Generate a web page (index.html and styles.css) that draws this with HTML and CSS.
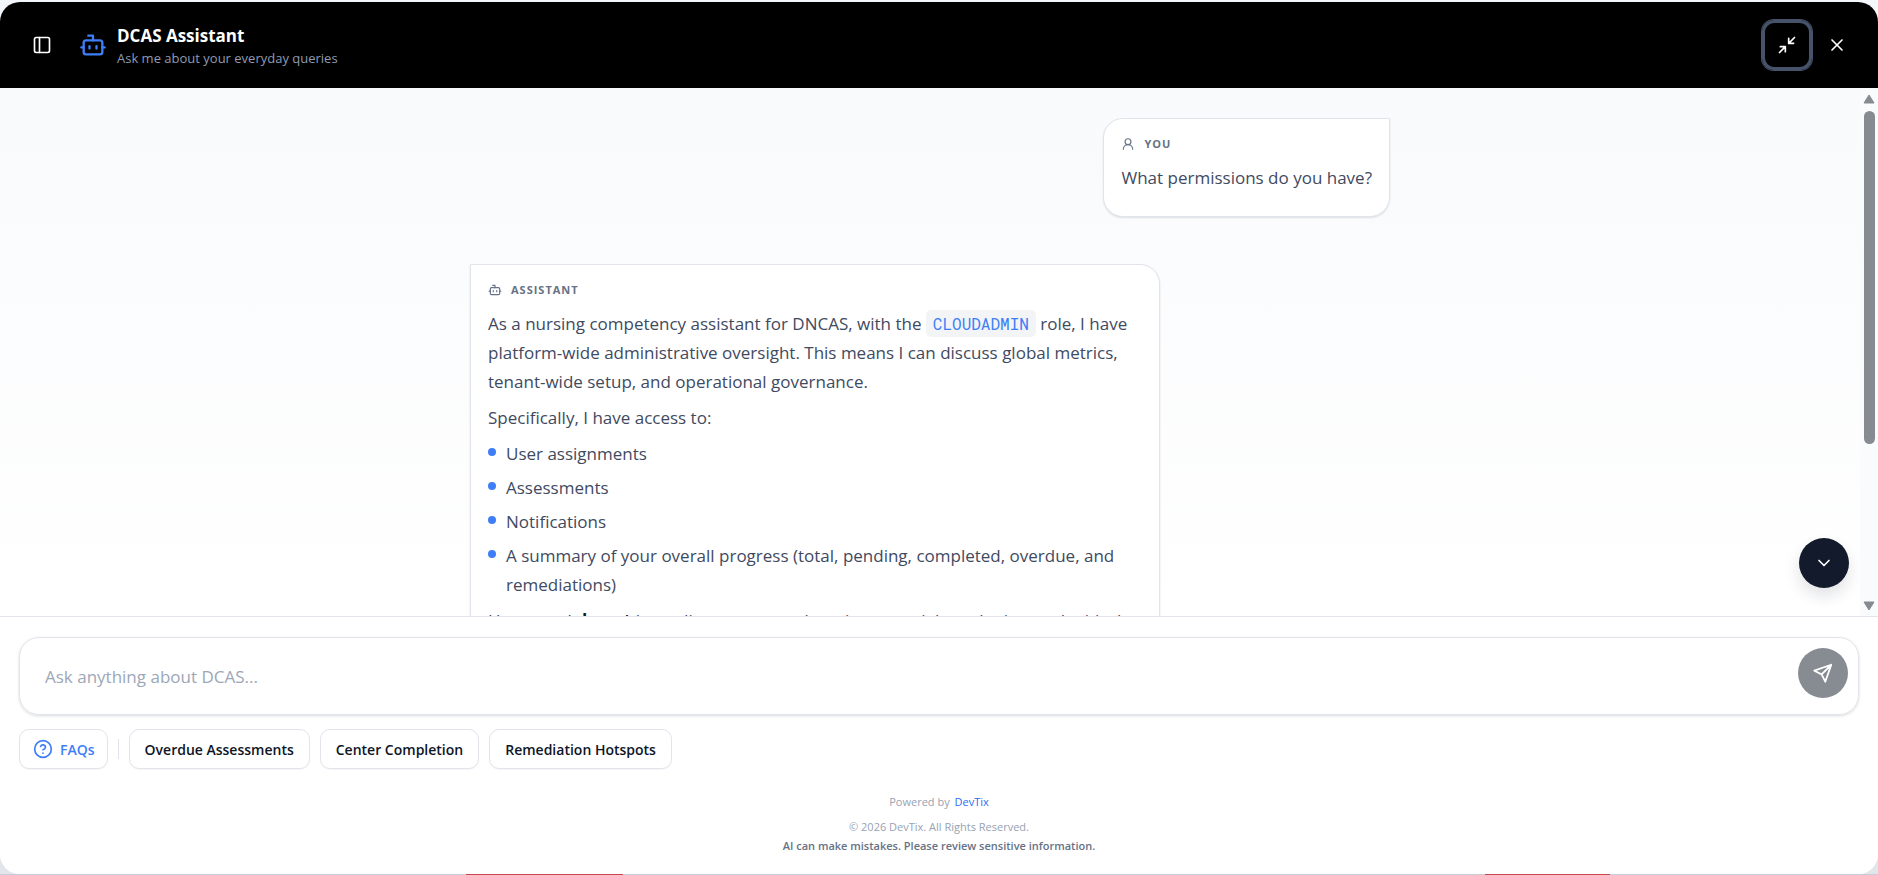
FILE: index.html
```html
<!DOCTYPE html>
<html lang="en">
  <head>
    <meta charset="utf-8" />
    <title>DCAS Assistant</title>
    <link rel="stylesheet" href="styles.css" />
  </head>
  <body>
    <div class="panel">
      <header class="header">
        <button class="icon-btn" aria-label="Toggle sidebar">
          <svg class="icon" width="20" height="20" viewBox="0 0 24 24">
            <rect x="3" y="3" width="18" height="18" rx="2" />
            <path d="M9 3v18" />
          </svg>
        </button>
        <svg class="icon bot" width="28" height="28" viewBox="0 0 24 24">
          <path d="M12 8V4H8" />
          <rect x="4" y="8" width="16" height="12" rx="2" />
          <path d="M2 14h2M20 14h2M15 13v2M9 13v2" />
        </svg>
        <div class="titles">
          <h1>DCAS Assistant</h1>
          <p>Ask me about your everyday queries</p>
        </div>
        <button class="icon-btn focused" aria-label="Exit full screen">
          <svg class="icon" width="20" height="20" viewBox="0 0 24 24">
            <path d="M4 14h6v6M20 10h-6V4M14 10l7-7M3 21l7-7" />
          </svg>
        </button>
        <button class="icon-btn" aria-label="Close">
          <svg class="icon" width="20" height="20" viewBox="0 0 24 24">
            <path d="M18 6 6 18M6 6l12 12" />
          </svg>
        </button>
      </header>

      <div class="chat">
        <main class="messages">
          <div class="thread">
            <article class="bubble user">
              <div class="sender">
                <svg class="icon" width="14" height="14" viewBox="0 0 24 24">
                  <circle cx="12" cy="8" r="5" />
                  <path d="M20 21a8 8 0 0 0-16 0" />
                </svg>
                <span>You</span>
              </div>
              <p>What permissions do you have?</p>
            </article>

            <article class="bubble assistant">
              <div class="sender">
                <svg class="icon" width="14" height="14" viewBox="0 0 24 24">
                  <path d="M12 8V4H8" />
                  <rect x="4" y="8" width="16" height="12" rx="2" />
                  <path d="M2 14h2M20 14h2M15 13v2M9 13v2" />
                </svg>
                <span>Assistant</span>
              </div>
              <p>
                As a nursing competency assistant for DNCAS, with the
                <code>CLOUDADMIN</code> role, I have platform-wide
                administrative oversight. This means I can discuss global
                metrics, tenant-wide setup, and operational governance.
              </p>
              <p>Specifically, I have access to:</p>
              <ul>
                <li>User assignments</li>
                <li>Assessments</li>
                <li>Notifications</li>
                <li>
                  A summary of your overall progress (total, pending,
                  completed, overdue, and remediations)
                </li>
              </ul>
              <p>
                However, I <b>do not</b> have direct access to learning
                materials or the internal critical
              </p>
            </article>
          </div>
          <button class="scroll-down" aria-label="Scroll to bottom">
            <svg class="icon" width="20" height="20" viewBox="0 0 24 24">
              <path d="m6 9 6 6 6-6" />
            </svg>
          </button>
        </main>
        <div class="scrollbar">
          <svg width="14" height="10" viewBox="0 0 14 10">
            <path d="M7 1 12 9H2z" />
          </svg>
          <div class="track"><div class="thumb"></div></div>
          <svg width="14" height="10" viewBox="0 0 14 10">
            <path d="M7 9 2 1h10z" />
          </svg>
        </div>
      </div>

      <footer class="footer">
        <form class="composer">
          <input
            type="text"
            placeholder="Ask anything about DCAS..."
            aria-label="Message"
          />
          <button type="button" class="send" aria-label="Send">
            <svg class="icon" width="22" height="22" viewBox="0 0 24 24">
              <path d="M21 3 2.500 9.500 10.500 13.500 14.500 21.500zM21 3 10.500 13.500" />
            </svg>
          </button>
        </form>

        <div class="chips">
          <button class="chip faq">
            <svg class="icon" width="20" height="20" viewBox="0 0 24 24">
              <circle cx="12" cy="12" r="10" />
              <path d="M9.090 9a3 3 0 0 1 5.830 1c0 2-3 3-3 3M12 17h.01" />
            </svg>
            FAQs
          </button>
          <span class="divider"></span>
          <button class="chip">Overdue Assessments</button>
          <button class="chip">Center Completion</button>
          <button class="chip">Remediation Hotspots</button>
        </div>

        <div class="legal">
          <p class="powered">Powered by <a href="#">DevTix</a></p>
          <p>&copy; 2026 DevTix. All Rights Reserved.</p>
          <p class="warning">
            AI can make mistakes. Please review sensitive information.
          </p>
        </div>
      </footer>
    </div>
  </body>
</html>
```

FILE: styles.css
```css
* {
  box-sizing: border-box;
}
body {
  margin: 0;
  height: 100vh;
  padding: 2px 0 1px;
  font-family: "Segoe UI", "Open Sans", "Noto Sans", sans-serif;
  color: #3f4a5f;
  /* page edge that shows below the panel */
  background:
    linear-gradient(90deg, #c9cdd8 0 466px, #c8474f 466px 623px, #c9cdd8 623px 1485px, #c8474f 1485px 1610px, #c9cdd8 1610px) bottom / 100% 1px no-repeat,
    linear-gradient(#f3f6fa, #e2e6eb);
}
p,
h1,
ul {
  margin: 0;
}
button,
input {
  font-family: inherit;
}
button {
  cursor: pointer;
}
.icon {
  flex: none;
  fill: none;
  stroke: currentColor;
  stroke-width: 2;
  stroke-linecap: round;
  stroke-linejoin: round;
}
.panel {
  display: flex;
  flex-direction: column;
  height: 100%;
  overflow: hidden;
  border-radius: 20px;
  background: #fff;
}

/* header */
.header {
  display: flex;
  align-items: center;
  height: 86px;
  padding: 0 16px 0 17px;
  background: #000;
  color: #fff;
}
.icon-btn {
  display: flex;
  align-items: center;
  justify-content: center;
  width: 50px;
  height: 50px;
  padding: 0;
  border: 0;
  border-radius: 12px;
  background: none;
  color: #fff;
}
.icon-btn.focused {
  box-shadow: 0 0 0 1px #46536a;
  border: 3px solid #46536a;
}
.bot {
  margin: 0 10px 0 12px;
  color: #3f7ef7;
}
.titles {
  flex: 1;
  padding-top: 2px;
}
.titles h1 {
  font-size: 17px;
  line-height: 24px;
}
.titles p {
  font-size: 13px;
  line-height: 20px;
  color: #8f9bb0;
}

/* messages */
.chat {
  display: flex;
  flex: 1;
  min-height: 0;
}
.messages {
  position: relative;
  flex: 1;
  overflow: hidden;
  padding-top: 30px;
  background: linear-gradient(#f9fafc, #fff);
}
.thread {
  display: flex;
  flex-direction: column;
  gap: 47px;
  width: 920px;
  max-width: 100%;
  margin: 0 auto;
}
.bubble {
  padding: 17px;
  border: 1px solid #e1e4ea;
  background: #fff;
  box-shadow: 0 1px 2px rgba(15, 23, 42, 0.12);
  font-size: 17px;
  line-height: 29px;
}
.bubble p {
  margin-bottom: 7px;
}
.user {
  align-self: flex-end;
  border-radius: 20px 0 20px 20px;
}
.assistant {
  width: 75%;
  border-radius: 0 20px 20px 20px;
}
.sender {
  display: flex;
  align-items: center;
  gap: 9px;
  margin-bottom: 11px;
  font-size: 11px;
  line-height: 16px;
  font-weight: 700;
  letter-spacing: 1px;
  text-transform: uppercase;
  color: #667286;
}
.bubble code {
  padding: 3px 7px;
  border-radius: 5px;
  background: #f2f4f6;
  color: #3f7ef7;
  font-family: "Roboto Mono", "Liberation Mono", monospace;
  font-size: 16px;
}
.bubble b {
  color: #101828;
}
.bubble ul {
  display: flex;
  flex-direction: column;
  gap: 5px;
  margin-bottom: 7px;
  padding: 0;
  list-style: none;
}
.bubble li {
  display: flex;
  gap: 10px;
}
.bubble li::before {
  content: "";
  flex: none;
  width: 8px;
  height: 8px;
  margin-top: 9px;
  border-radius: 50%;
  background: #3f7ef7;
}
.scroll-down {
  position: absolute;
  right: 11px;
  bottom: 28px;
  display: flex;
  align-items: center;
  justify-content: center;
  width: 50px;
  height: 50px;
  padding: 0;
  border: 0;
  border-radius: 50%;
  background: #121a2b;
  color: #fff;
  box-shadow: 0 8px 16px rgba(15, 23, 42, 0.12);
}
.scrollbar {
  display: flex;
  flex-direction: column;
  align-items: center;
  gap: 7px;
  width: 18px;
  padding: 6px 0 5px;
  background: #fafbfc;
}
.scrollbar svg {
  fill: #868b92;
  stroke: #868b92;
  stroke-linejoin: round;
}
.track {
  flex: 1;
}
.thumb {
  width: 11px;
  height: 69%;
  border-radius: 6px;
  background: #868b92;
}

/* footer */
.footer {
  padding: 20px 19px 19px;
  border-top: 1px solid #e1e4ea;
  background: #fff;
}
.composer {
  display: flex;
  gap: 12px;
  height: 78px;
  padding: 10px;
  border: 1px solid #e1e4ea;
  border-radius: 20px;
  box-shadow: 0 1px 3px rgba(15, 23, 42, 0.16);
}
.composer input {
  flex: 1;
  min-width: 0;
  padding: 0 15px;
  border: 0;
  outline: 0;
  background: none;
  font-size: 17px;
  color: #3f4a5f;
}
.composer input::placeholder {
  color: #9ca7b7;
}
.send {
  display: flex;
  align-items: center;
  justify-content: center;
  width: 50px;
  height: 50px;
  padding: 0;
  border: 0;
  border-radius: 50%;
  background: #878b92;
  color: #fff;
}
.chips {
  display: flex;
  align-items: center;
  gap: 10px;
  margin-top: 14px;
}
.chip {
  display: flex;
  align-items: center;
  gap: 7px;
  height: 40px;
  padding: 0 15px;
  border: 1px solid #e1e4ea;
  border-radius: 10px;
  background: #fff;
  color: #0d1526;
  font-size: 14px;
  font-weight: 600;
  box-shadow: 0 1px 1px rgba(15, 23, 42, 0.04);
}
.faq {
  padding: 0 12px 0 13px;
  color: #3f7ef7;
}
.divider {
  width: 1px;
  height: 20px;
  background: #e1e4ea;
}
.legal {
  margin-top: 23px;
  text-align: center;
  font-size: 11px;
  line-height: 19px;
  color: #97a2b3;
}
.powered {
  margin-bottom: 6px;
}
.legal a {
  margin-left: 2px;
  color: #2f6df0;
  font-weight: 500;
  text-decoration: none;
}
.warning {
  font-weight: 600;
  color: #667286;
}
```
